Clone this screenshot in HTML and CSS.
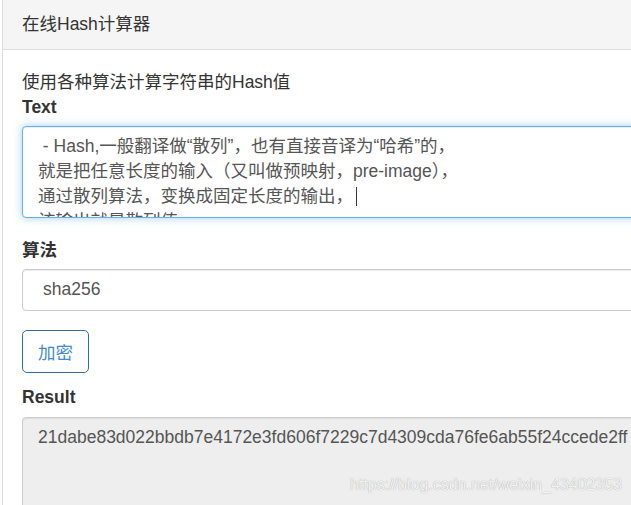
FILE: index.html
```html
<!DOCTYPE html>
<html lang="zh-CN">
<head>
    <meta charset="UTF-8">
    <meta name="viewport" content="width=device-width, initial-scale=1.0">
    <title>在线Hash计算器</title>
    <link rel="stylesheet" href="styles.css">
</head>
<body>
    <div class="panel">
        <div class="panel-heading">在线Hash计算器</div>
        <div class="panel-body">
            <p class="intro">使用各种算法计算字符串的Hash值</p>
            <div class="form-group">
                <label>Text</label>
                <div class="form-control textarea focus"> - Hash,一般翻译做“散列”，也有直接音译为“哈希”的，
就是把任意长度的输入（又叫做预映射，pre-image），
通过散列算法，变换成固定长度的输出，<span class="caret"></span>
该输出就是散列值。</div>
            </div>
            <div class="form-group">
                <label>算法</label>
                <select class="form-control select">
                    <option>sha256</option>
                    <option>md5</option>
                    <option>sha1</option>
                </select>
            </div>
            <button class="btn">加密</button>
            <div class="form-group result-group">
                <label>Result</label>
                <div class="form-control result">21dabe83d022bbdb7e4172e3fd606f7229c7d4309cda76fe6ab55f24ccede2ff</div>
            </div>
        </div>
    </div>
    <div class="watermark">https://blog.csdn.net/weixin_43402353</div>
</body>
</html>
```

FILE: styles.css
```css
html, body {
    margin: 0;
    height: 100%;
    overflow: hidden;
}
body {
    font-family: "Liberation Sans", "Noto Sans CJK SC", sans-serif;
    font-size: 17.5px;
    line-height: 25px;
    color: #333;
    background-color: #fff;
    position: relative;
}
.panel {
    margin: -1px 0 0 2px;
    width: 720px;
    border: 1px solid #ddd;
    background-color: #fff;
}
.panel-heading {
    height: 50px;
    box-sizing: border-box;
    padding: 0 19px;
    display: flex;
    align-items: center;
    background-color: #f5f5f5;
    border-bottom: 1px solid #ddd;
    font-size: 17.5px;
}
.panel-body {
    padding: 20px 19px 19px;
}
.intro {
    margin: 0;
}
label {
    display: block;
    font-weight: bold;
    margin-bottom: 6px;
}
.form-group {
    margin-bottom: 19.5px;
}
.form-control {
    display: block;
    width: 100%;
    box-sizing: border-box;
    border: 1px solid #ccc;
    border-radius: 4px;
    padding: 7px 15px;
    font-family: inherit;
    font-size: 17.5px;
    line-height: 25px;
    color: #555;
    background-color: #fff;
    box-shadow: inset 0 1px 1px rgba(0, 0, 0, .075);
}
.textarea {
    height: 92px;
    overflow: hidden;
    white-space: pre;
}
.focus {
    border-color: #66afe9;
    box-shadow: inset 0 1px 1px rgba(0, 0, 0, .075), 0 0 8px rgba(102, 175, 233, .6);
}
.caret {
    display: inline-block;
    width: 1px;
    height: 19px;
    background-color: #333;
    vertical-align: -4px;
    margin-left: 3px;
}
.select {
    height: 42px;
    padding-left: 20px;
    appearance: none;
    -webkit-appearance: none;
}
.btn {
    display: block;
    height: 43px;
    padding: 0 15px;
    font-family: inherit;
    font-size: 17.5px;
    color: #428bca;
    background-color: #fff;
    border: 1px solid #2e6da4;
    border-radius: 5px;
    cursor: pointer;
}
.result-group {
    margin-top: 12px;
}
.result-group label {
    margin-bottom: 7px;
}
.result {
    height: 140px;
    background-color: #eee;
    white-space: nowrap;
}
.watermark {
    position: absolute;
    left: 350px;
    top: 472px;
    font-size: 16px;
    color: rgba(255, 255, 255, .9);
    text-shadow: 0 0 1px rgba(0, 0, 0, .4);
}
```
